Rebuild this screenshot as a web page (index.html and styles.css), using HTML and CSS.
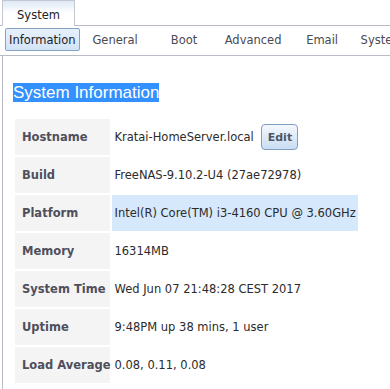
FILE: index.html
```html
<!DOCTYPE html>
<html>
<head>
<meta charset="utf-8">
<link rel="stylesheet" href="styles.css">
</head>
<body>
<div class="tabbar">
  <div class="tab">System</div>
</div>
<div class="subnav">
  <div class="sub active">Information</div>
  <div class="sub">General</div>
  <div class="sub">Boot</div>
  <div class="sub">Advanced</div>
  <div class="sub">Email</div>
  <div class="sub">System Dataset</div>
</div>
<div class="panel">
  <h1 class="title"><span class="sel">System Information</span></h1>
  <table class="info">
    <tr><th>Hostname</th><td>Kratai-HomeServer.local <button class="edit">Edit</button></td></tr>
    <tr><th>Build</th><td>FreeNAS-9.10.2-U4 (27ae72978)</td></tr>
    <tr><th>Platform</th><td class="hl">Intel(R) Core(TM) i3-4160 CPU @ 3.60GHz</td></tr>
    <tr><th>Memory</th><td>16314MB</td></tr>
    <tr><th>System Time</th><td>Wed Jun 07 21:48:28 CEST 2017</td></tr>
    <tr><th>Uptime</th><td>9:48PM up 38 mins, 1 user</td></tr>
    <tr><th>Load Average</th><td>0.08, 0.11, 0.08</td></tr>
  </table>
</div>
</body>
</html>
```
FILE: styles.css
```css
html, body {
  margin: 0;
  padding: 0;
  background: #fff;
  overflow: hidden;
}
body {
  font-family: "DejaVu Sans", Verdana, sans-serif;
  font-size: 11.5px;
  color: #333;
  width: 390px;
  height: 389px;
}
.tabbar {
  height: 25px;
  border-bottom: 1px solid #b9bcc4;
  display: flex;
  align-items: flex-end;
}
.tab {
  margin-left: 2px;
  width: 73px;
  box-sizing: border-box;
  border: 1px solid #c3c7cf;
  border-bottom: none;
  margin-bottom: -1px;
  height: 26px;
  background: linear-gradient(#dfe9f7 0px, #ffffff 12px);
  display: flex;
  align-items: center;
  justify-content: center;
  padding-top: 2px;
  color: #222;
}
.subnav {
  display: flex;
  padding: 2px 0 4px 5px;
  border-bottom: 1px solid #b9bcc4;
  white-space: nowrap;
  overflow: hidden;
}
.sub {
  min-width: 69px;
  box-sizing: border-box;
  height: 23px;
  padding: 0 3px;
  border: 1px solid transparent;
  border-radius: 2px;
  display: flex;
  align-items: center;
  justify-content: center;
  color: #4a4a52;
  flex: none;
}
.sub.active {
  min-width: 0;
  margin-right: 1px;
  border-color: #86a3c4;
  background: linear-gradient(#e6f0fb, #d3e4f7);
  color: #222;
}
.panel {
  margin-left: 2px;
  border-left: 1px solid #b9bcc4;
  padding: 27px 0 0 10px;
  height: 333px;
  box-sizing: border-box;
  overflow: hidden;
}
.title {
  margin: 0;
  font-family: "Liberation Sans", Arial, sans-serif;
  font-weight: normal;
  font-size: 17px;
  line-height: 19px;
  height: 19px;
}
.sel {
  background: #3390ff;
  color: #fff;
  display: inline-block;
  height: 19px;
}
.info {
  margin-top: 15px;
  border-spacing: 2px;
}
.info th {
  width: 88px;
  height: 36px;
  padding: 0 0 0 7px;
  background: #f4f4f4;
  text-align: left;
  font-weight: bold;
  color: #4f4f5c;
  white-space: nowrap;
}
.info td {
  height: 36px;
  padding: 0 2px;
  white-space: nowrap;
  color: #2b2b2b;
}
.info td.hl {
  background: #d6e8fb;
}
.edit {
  font-family: "DejaVu Sans", Verdana, sans-serif;
  font-size: 11px;
  font-weight: bold;
  color: #4d5766;
  width: 37px;
  height: 26px;
  margin-left: 4px;
  border: 1px solid #7f9fc4;
  border-radius: 4px;
  background: linear-gradient(#f4f8fd, #c9ddf3);
  padding: 0;
  vertical-align: middle;
}
```
